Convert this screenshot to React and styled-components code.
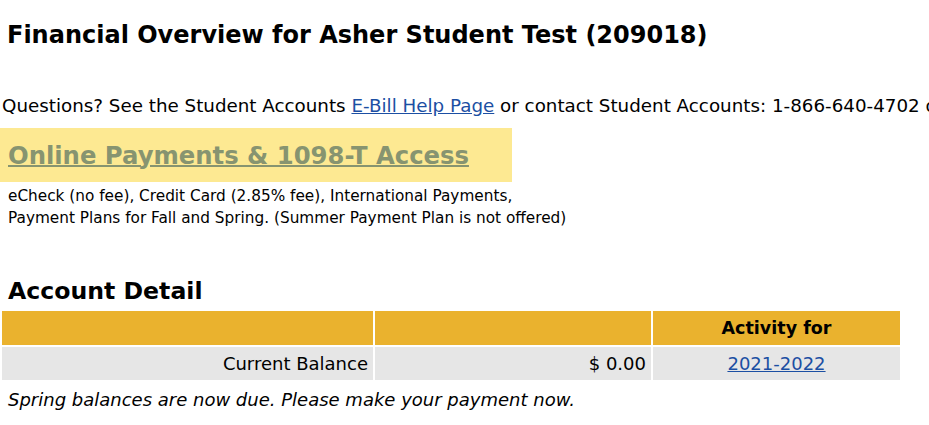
import React from 'react';
import styled, { createGlobalStyle } from 'styled-components';

const GlobalStyle = createGlobalStyle`
  body {
    margin: 0;
    background: #ffffff;
    color: #000000;
    font-family: 'DejaVu Sans', Verdana, sans-serif;
  }
`;

const Page = styled.div`
  display: flex;
  flex-direction: column;
  width: 929px;
  overflow: hidden;
`;

const Title = styled.h1`
  margin: 0;
  padding: 20px 0 0 7px;
  font-size: 24px;
  line-height: 30px;
  font-weight: 700;
  white-space: nowrap;
`;

const Questions = styled.p`
  margin: 0;
  padding: 45px 0 0 2px;
  font-size: 18.3px;
  line-height: 22px;
  white-space: nowrap;
  overflow: hidden;
`;

const Link = styled.a`
  color: #1c4fa3;
  text-decoration: underline;
`;

const PayBox = styled.div`
  margin-top: 11px;
  width: 512px;
  height: 54px;
  display: flex;
  align-items: center;
  background: #fde992;
  padding-left: 8px;
  box-sizing: border-box;
`;

const PayLink = styled.a`
  color: #879470;
  font-size: 24.3px;
  font-weight: 700;
  text-decoration: underline;
  text-decoration-thickness: 2px;
  white-space: nowrap;
`;

const Methods = styled.p`
  margin: 0;
  padding: 3px 0 0 8px;
  font-size: 15.3px;
  line-height: 22px;
`;

const SectionTitle = styled.h2`
  margin: 0;
  padding: 47px 0 0 8px;
  font-size: 23.6px;
  line-height: 30px;
  font-weight: 700;
`;

const Table = styled.table`
  margin-top: 3px;
  border-collapse: separate;
  border-spacing: 2px;
  width: 902px;
  font-size: 18px;
`;

const HeadCell = styled.th`
  background: #eab22e;
  height: 34px;
  padding: 0 5px;
  text-align: ${p => p.$align || 'center'};
  font-size: 17.5px;
`;

const Cell = styled.td`
  background: #e6e6e6;
  height: 33px;
  padding: 0 5px;
  text-align: ${p => p.$align || 'left'};
`;

const Note = styled.p`
  margin: 0;
  padding: 7px 0 0 8px;
  font-size: 18px;
  font-style: italic;
  line-height: 22px;
`;

export default function App() {
  return (
    <Page>
      <GlobalStyle />
      <Title>Financial Overview for Asher Student Test (209018)</Title>
      <Questions>
        Questions? See the Student Accounts <Link href="#">E-Bill Help Page</Link> or
        contact Student Accounts: 1-866-640-4702 or
      </Questions>
      <PayBox>
        <PayLink href="#">Online Payments &amp; 1098-T Access</PayLink>
      </PayBox>
      <Methods>
        eCheck (no fee), Credit Card (2.85% fee), International Payments,
        <br />
        Payment Plans for Fall and Spring. (Summer Payment Plan is not offered)
      </Methods>
      <SectionTitle>Account Detail</SectionTitle>
      <Table>
        <colgroup>
          <col style={{ width: 371 }} />
          <col style={{ width: 276 }} />
          <col />
        </colgroup>
        <thead>
          <tr>
            <HeadCell />
            <HeadCell />
            <HeadCell>Activity for</HeadCell>
          </tr>
        </thead>
        <tbody>
          <tr>
            <Cell $align="right">Current Balance</Cell>
            <Cell $align="right">$ 0.00</Cell>
            <Cell $align="center">
              <Link href="#">2021-2022</Link>
            </Cell>
          </tr>
        </tbody>
      </Table>
      <Note>Spring balances are now due. Please make your payment now.</Note>
    </Page>
  );
}
